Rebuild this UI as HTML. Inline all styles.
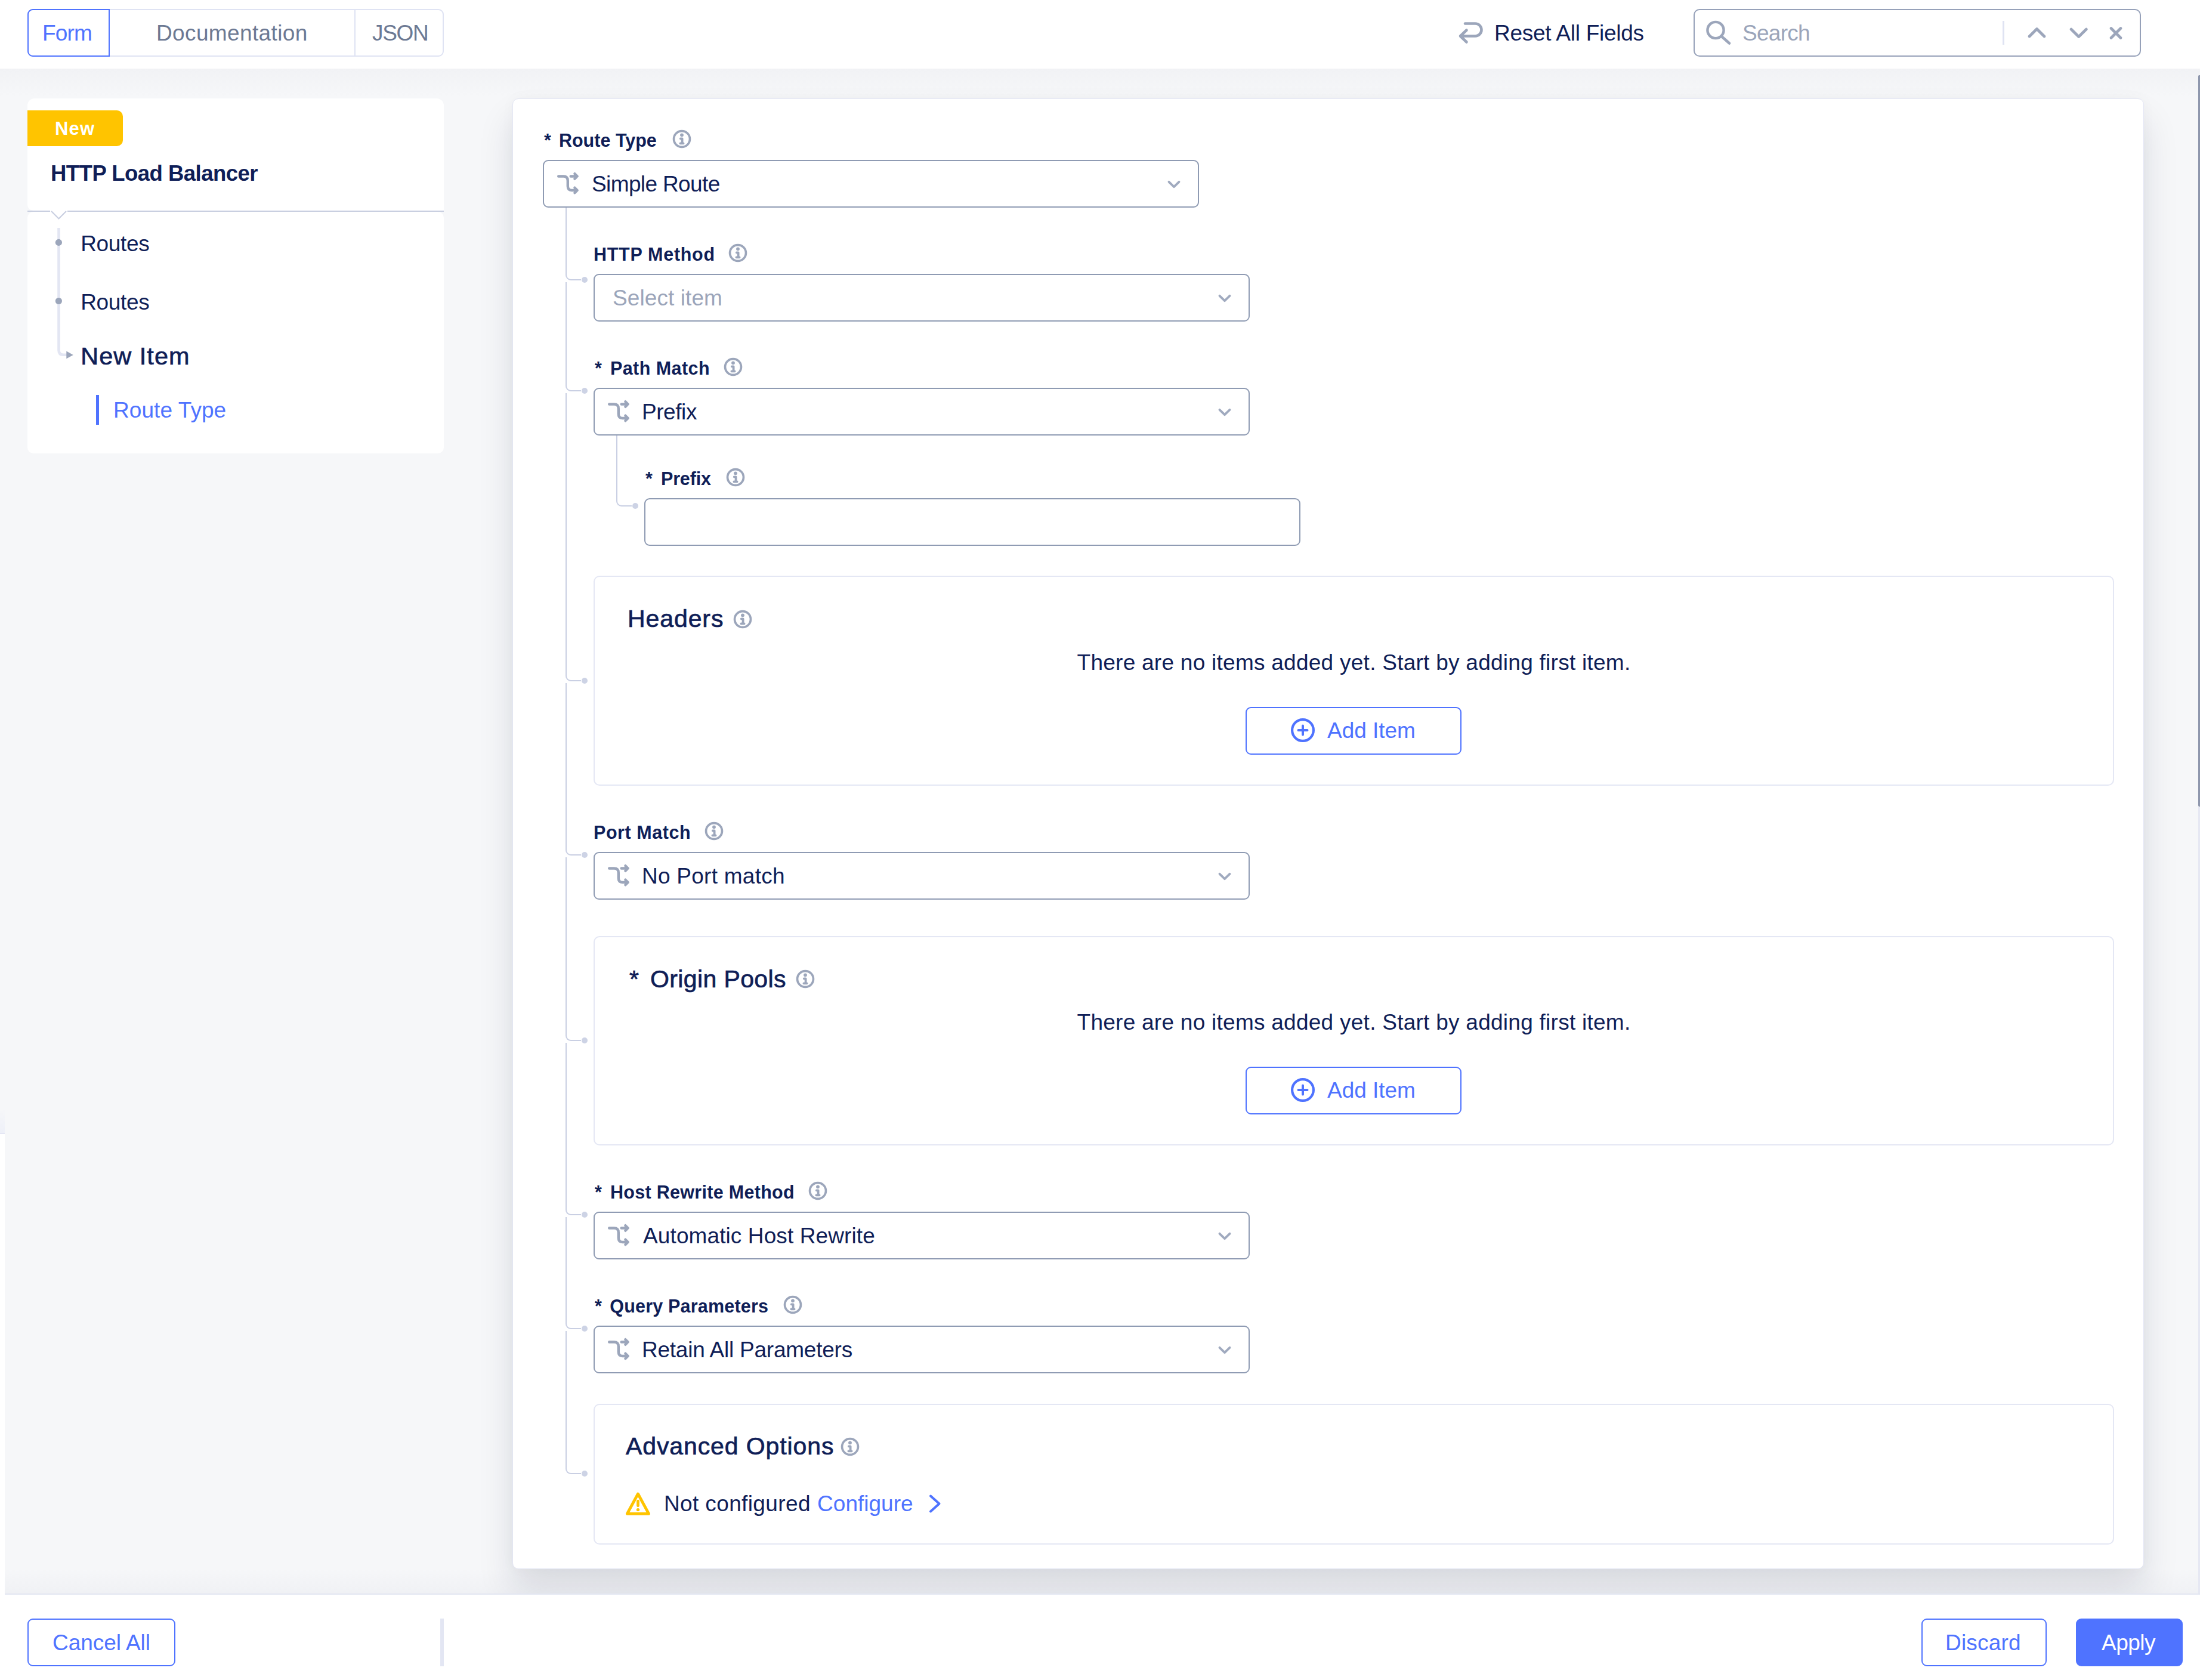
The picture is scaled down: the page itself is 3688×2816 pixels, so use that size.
<!DOCTYPE html>
<html lang="en"><head><meta charset="utf-8"><title>HTTP Load Balancer - Route</title>
<style>
*{box-sizing:border-box}
html,body{margin:0;padding:0}
body{width:3688px;height:2816px;overflow:hidden;background:#f6f7f9;font-family:"Liberation Sans", sans-serif;position:relative;color:#0f1e57}
.t{position:absolute;white-space:nowrap;display:block}
.ic{position:absolute;overflow:visible}
.abs{position:absolute}
header{position:absolute;left:0;top:0;width:3688px;height:115px;background:#fff}
.hshade{position:absolute;left:0;top:115px;width:3688px;height:46px;background:linear-gradient(#f1f2f5,#f6f7f9)}
.tabs{position:absolute;left:46px;top:15px;width:698px;height:80px;border:2px solid #dfe3f3;border-radius:9px;background:#fff}
.tab-active{position:absolute;left:46px;top:15px;width:138px;height:80px;border:2px solid #4f73ff;border-radius:9px 0 0 9px;background:#fff}
.tabdiv{position:absolute;left:594px;top:17px;width:2px;height:76px;background:#dfe3f3}
.search{position:absolute;left:2839px;top:15px;width:750px;height:80px;border:2px solid #96a1b9;border-radius:10px;background:#fff}
.sdiv{position:absolute;left:3357px;top:35px;width:3px;height:40px;background:#dfe3f2}
.side-top{position:absolute;left:46px;top:165px;width:698px;height:188px;background:#fff;border-radius:12px 12px 0 10px}
.side-line{position:absolute;left:46px;top:353px;width:698px;height:2px;background:#c8cee0}
.side-bot{position:absolute;left:46px;top:355px;width:698px;height:405px;background:#fff;border-radius:10px}
.badge{position:absolute;left:46px;top:185px;width:160px;height:60px;background:#ffc400;border-radius:0 10px 10px 0}
.card{position:absolute;left:859px;top:165px;width:2735px;height:2465px;background:#fff;border:1px solid #e3e6f4;border-radius:10px;box-shadow:0 36px 60px rgba(15,25,60,.12),0 0 24px rgba(15,25,60,.03)}
.sel{position:absolute;width:1100px;height:80px;border:2px solid #8f9bb3;border-radius:9px;background:#fff}
.box{position:absolute;left:995px;width:2549px;border:2px solid #e4e7f4;border-radius:10px;background:#fff}
.conn{position:absolute;width:26px;border-left:2px solid #c9cfe3;border-bottom:2px solid #c9cfe3;border-bottom-left-radius:9px}
.vline{position:absolute;width:2px;background:#c9cfe3}
.dot{position:absolute;width:10px;height:10px;border-radius:50%;background:#cdd3e5}
.btn{position:absolute;height:80px;border:2px solid #4f73ff;border-radius:9px;background:#fff}
.btn.primary{background:#4f73ff}
footer{position:absolute;left:0;top:2671px;width:3688px;height:145px;background:#fff;border-top:2px solid #e3e6f2}
.fdiv{position:absolute;left:738px;top:2713px;width:6px;height:80px;background:#e3e6f3}
.sb-thumb{position:absolute;left:3685px;top:126px;width:3px;height:1226px;background:#8e97ad;border-radius:2px 0 0 2px}
.sb-track{position:absolute;left:3685px;top:1352px;width:3px;height:1319px;background:#e6e8f3}
.lstrip{position:absolute;left:0;top:1899px;width:8px;height:780px;background:#fff;border-top:2px solid #e4e6f4}
.lshade{position:absolute;left:0;top:1859px;width:8px;height:40px;background:linear-gradient(rgba(238,240,248,0),#eef0f8)}
.fshade{position:absolute;left:8px;top:2628px;width:3680px;height:43px;background:linear-gradient(rgba(20,30,80,0),rgba(20,30,80,.028))}
</style></head><body>

<div class="hshade"></div>
<header>
<nav class="tabs"></nav><div class="tab-active"></div><div class="tabdiv"></div>
<span class="t" style="left:71.05px;top:37.00px;font-size:37px;line-height:37px;color:#4f73ff;letter-spacing:-0.85px;">Form</span>
<span class="t" style="left:262.00px;top:37.00px;font-size:37px;line-height:37px;color:#6c7993;letter-spacing:0.37px;">Documentation</span>
<span class="t" style="left:624.05px;top:37.00px;font-size:37px;line-height:37px;color:#6c7993;letter-spacing:-1.35px;">JSON</span>
<svg class="ic" style="left:2440px;top:30px" width="52" height="50" viewBox="2440 30 52 50"><path d="M2456 39.5H2473A10.5 10.5 0 0 1 2473 60.5H2448.5M2458.5 50.5L2448 60.5L2458.5 70.5" fill="none" stroke="#9ca6bb" stroke-width="4.6" stroke-linecap="round" stroke-linejoin="round"/></svg>
<span class="t" style="left:2504.95px;top:37.00px;font-size:37px;line-height:37px;color:#0f1e57;letter-spacing:-0.26px;">Reset All Fields</span>
<div class="search"></div><div class="sdiv"></div>
<svg class="ic" style="left:2855px;top:30px" width="52" height="50" viewBox="2855 30 52 50"><circle cx="2876" cy="50.5" r="13.6" fill="none" stroke="#9ca6bb" stroke-width="4.4"/><path d="M2886 61L2899 72.5" stroke="#9ca6bb" stroke-width="4.6" stroke-linecap="round"/></svg>
<span class="t" style="left:2921.05px;top:37.00px;font-size:37px;line-height:37px;color:#9ba5ba;letter-spacing:-0.75px;">Search</span>
<svg class="ic" style="left:3390px;top:35px" width="180" height="40" viewBox="3390 35 180 40"><path d="M3402 61L3414.5 48.5L3427 61M3472 49L3484.7 61.5L3497.4 49M3539 47.5L3555 63.5M3555 47.5L3539 63.5" fill="none" stroke="#9ca6bb" stroke-width="4.6" stroke-linecap="round" stroke-linejoin="round"/></svg>
</header>
<aside>
<div class="side-top"></div><div class="side-line"></div><div class="side-bot"></div>
<svg class="ic" style="left:80px;top:350px" width="40" height="22" viewBox="80 350 40 22"><path d="M84 352H113V356H84Z" fill="#fff"/><path d="M86 354L98.5 366.5L111 354" fill="#fff" stroke="#c8cee0" stroke-width="2"/></svg>
<div class="badge"></div>
<span class="t" style="left:92.00px;top:200.00px;font-size:31px;line-height:31px;color:#fff;font-weight:700;letter-spacing:1.14px;">New</span>
<span class="t" style="left:85.00px;top:273.00px;font-size:36.5px;line-height:36.5px;color:#0f1e57;font-weight:700;letter-spacing:-0.52px;">HTTP Load Balancer</span>
<svg class="ic" style="left:90px;top:380px" width="40" height="226" viewBox="90 380 40 226"><path d="M98.5 382V587Q98.5 594.7 106 594.7H113" fill="none" stroke="#e3e6f3" stroke-width="4.6"/><circle cx="98.4" cy="406.4" r="5.6" fill="#9ca6bb"/><circle cx="98.4" cy="504.5" r="5.6" fill="#9ca6bb"/><path d="M111.3 588.6L122.8 594.9L111.3 601.2Z" fill="#9ca6bb"/></svg>
<span class="t" style="left:135.16px;top:390.00px;font-size:37px;line-height:37px;color:#0f1e57;letter-spacing:-0.31px;">Routes</span>
<span class="t" style="left:135.16px;top:488.00px;font-size:37px;line-height:37px;color:#0f1e57;letter-spacing:-0.31px;">Routes</span>
<span class="t" style="left:135.16px;top:577.00px;font-size:41.4px;line-height:41.4px;color:#0f1e57;letter-spacing:1.08px;-webkit-text-stroke:0.7px #0f1e57;">New Item</span>
<div class="abs" style="left:161px;top:662px;width:5px;height:50px;background:#4f73ff"></div>
<span class="t" style="left:190.00px;top:669.00px;font-size:37px;line-height:37px;color:#4f73ff;letter-spacing:0.07px;">Route Type</span>
</aside>
<div class="fshade"></div>
<main>
<div class="card"></div>
<span class="t" style="left:912.05px;top:220.00px;font-size:30.5px;line-height:30.5px;color:#0f1e57;font-weight:700;">*</span><span class="t" style="left:936.95px;top:220.00px;font-size:30.5px;line-height:30.5px;color:#0f1e57;font-weight:700;letter-spacing:0.01px;">Route Type</span><svg class="ic" style="left:1125.5px;top:215.5px" width="34" height="34" viewBox="-17 -17 34 34"><circle r="13.45" fill="none" stroke="#9ca6bb" stroke-width="3.7"/><circle cx="0" cy="-6.7" r="2.9" fill="#9ca6bb"/><path d="M-2.2 -0.7H0.6V7.3M-2.6 7.3H2.6" fill="none" stroke="#9ca6bb" stroke-width="3.8" stroke-linecap="round" stroke-linejoin="round"/></svg>
<div class="sel" style="left:910px;top:268px"></div><svg class="ic" style="left:931px;top:286px" width="44" height="44" viewBox="-3 -3 44 44"><path d="M2.2 6.5H10.5Q17.8 6.5 17.8 14V23Q17.8 30 24.5 30H33.5M29.4 25.7L33.7 30L29.4 34.3M22.7 6.5H33.5M29.4 2.2L33.7 6.5L29.4 10.8" fill="none" stroke="#9ca6bb" stroke-width="4.4" stroke-linecap="round" stroke-linejoin="round"/></svg><span class="t" style="left:992.05px;top:290.00px;font-size:37px;line-height:37px;color:#0f1e57;letter-spacing:-0.63px;">Simple Route</span><svg class="ic" style="left:1954px;top:298.5px" width="28" height="20" viewBox="-14 -10 28 20"><path d="M-8.5 -4.2L0 4.2L8.5 -4.2" fill="none" stroke="#a0aabf" stroke-width="3.8" stroke-linecap="round" stroke-linejoin="round"/></svg>
<div class="conn" style="left:948px;top:348px;height:122px"></div><div class="dot" style="left:975px;top:464px"></div>
<div class="conn" style="left:948px;top:473px;height:183px"></div><div class="dot" style="left:975px;top:650px"></div>
<div class="conn" style="left:948px;top:659px;height:483px"></div><div class="dot" style="left:975px;top:1136px"></div>
<div class="conn" style="left:948px;top:1145px;height:289px"></div><div class="dot" style="left:975px;top:1428px"></div>
<div class="conn" style="left:948px;top:1437px;height:308px"></div><div class="dot" style="left:975px;top:1739px"></div>
<div class="conn" style="left:948px;top:1748px;height:289px"></div><div class="dot" style="left:975px;top:2031px"></div>
<div class="conn" style="left:948px;top:2040px;height:188px"></div><div class="dot" style="left:975px;top:2222px"></div>
<div class="conn" style="left:948px;top:2231px;height:240px"></div><div class="dot" style="left:975px;top:2465px"></div>
<span class="t" style="left:995.00px;top:411.00px;font-size:30.5px;line-height:30.5px;color:#0f1e57;font-weight:700;letter-spacing:0.71px;">HTTP Method</span><svg class="ic" style="left:1220px;top:406.5px" width="34" height="34" viewBox="-17 -17 34 34"><circle r="13.45" fill="none" stroke="#9ca6bb" stroke-width="3.7"/><circle cx="0" cy="-6.7" r="2.9" fill="#9ca6bb"/><path d="M-2.2 -0.7H0.6V7.3M-2.6 7.3H2.6" fill="none" stroke="#9ca6bb" stroke-width="3.8" stroke-linecap="round" stroke-linejoin="round"/></svg>
<div class="sel" style="left:995px;top:459px"></div><span class="t" style="left:1027.05px;top:481.00px;font-size:37px;line-height:37px;color:#9ba5ba;letter-spacing:0.08px;">Select item</span><svg class="ic" style="left:2039px;top:489.5px" width="28" height="20" viewBox="-14 -10 28 20"><path d="M-8.5 -4.2L0 4.2L8.5 -4.2" fill="none" stroke="#a0aabf" stroke-width="3.8" stroke-linecap="round" stroke-linejoin="round"/></svg>
<span class="t" style="left:997.05px;top:602.00px;font-size:30.5px;line-height:30.5px;color:#0f1e57;font-weight:700;">*</span><span class="t" style="left:1022.95px;top:602.00px;font-size:30.5px;line-height:30.5px;color:#0f1e57;font-weight:700;letter-spacing:0.44px;">Path Match</span><svg class="ic" style="left:1211.5px;top:597.5px" width="34" height="34" viewBox="-17 -17 34 34"><circle r="13.45" fill="none" stroke="#9ca6bb" stroke-width="3.7"/><circle cx="0" cy="-6.7" r="2.9" fill="#9ca6bb"/><path d="M-2.2 -0.7H0.6V7.3M-2.6 7.3H2.6" fill="none" stroke="#9ca6bb" stroke-width="3.8" stroke-linecap="round" stroke-linejoin="round"/></svg>
<div class="sel" style="left:995px;top:650px"></div><svg class="ic" style="left:1016px;top:668px" width="44" height="44" viewBox="-3 -3 44 44"><path d="M2.2 6.5H10.5Q17.8 6.5 17.8 14V23Q17.8 30 24.5 30H33.5M29.4 25.7L33.7 30L29.4 34.3M22.7 6.5H33.5M29.4 2.2L33.7 6.5L29.4 10.8" fill="none" stroke="#9ca6bb" stroke-width="4.4" stroke-linecap="round" stroke-linejoin="round"/></svg><span class="t" style="left:1075.95px;top:672.00px;font-size:37px;line-height:37px;color:#0f1e57;letter-spacing:-0.42px;">Prefix</span><svg class="ic" style="left:2039px;top:680.5px" width="28" height="20" viewBox="-14 -10 28 20"><path d="M-8.5 -4.2L0 4.2L8.5 -4.2" fill="none" stroke="#a0aabf" stroke-width="3.8" stroke-linecap="round" stroke-linejoin="round"/></svg>
<div class="conn" style="left:1033px;top:730px;height:119px"></div><div class="dot" style="left:1060px;top:843px"></div>
<span class="t" style="left:1082.05px;top:787.00px;font-size:30.5px;line-height:30.5px;color:#0f1e57;font-weight:700;">*</span><span class="t" style="left:1107.95px;top:787.00px;font-size:30.5px;line-height:30.5px;color:#0f1e57;font-weight:700;letter-spacing:-0.15px;">Prefix</span><svg class="ic" style="left:1215.5px;top:782.5px" width="34" height="34" viewBox="-17 -17 34 34"><circle r="13.45" fill="none" stroke="#9ca6bb" stroke-width="3.7"/><circle cx="0" cy="-6.7" r="2.9" fill="#9ca6bb"/><path d="M-2.2 -0.7H0.6V7.3M-2.6 7.3H2.6" fill="none" stroke="#9ca6bb" stroke-width="3.8" stroke-linecap="round" stroke-linejoin="round"/></svg>
<div class="sel" style="left:1080px;top:835px"></div>
<section class="box" style="top:965px;height:352px"></section>
<span class="t" style="left:1051.95px;top:1017.00px;font-size:41px;line-height:41px;color:#0f1e57;letter-spacing:0.92px;-webkit-text-stroke:0.7px #0f1e57;">Headers</span>
<svg class="ic" style="left:1228px;top:1021px" width="34" height="34" viewBox="-17 -17 34 34"><circle r="13.45" fill="none" stroke="#9ca6bb" stroke-width="3.7"/><circle cx="0" cy="-6.7" r="2.9" fill="#9ca6bb"/><path d="M-2.2 -0.7H0.6V7.3M-2.6 7.3H2.6" fill="none" stroke="#9ca6bb" stroke-width="3.8" stroke-linecap="round" stroke-linejoin="round"/></svg>
<span class="t" style="left:1805.52px;top:1092.00px;font-size:37px;line-height:37px;color:#0f1e57;letter-spacing:0.26px;">There are no items added yet. Start by adding first item.</span>
<div class="btn" style="left:2088px;top:1185px;width:362px"></div><svg class="ic" style="left:2160px;top:1200.1px" width="48" height="48" viewBox="-24 -24 48 48"><circle r="17.9" fill="none" stroke="#4f73ff" stroke-width="4.2"/><path d="M-7.5 0H7.5M0 -7.5V7.5" stroke="#4f73ff" stroke-width="4" stroke-linecap="round"/></svg><span class="t" style="left:2225.05px;top:1206.00px;font-size:37px;line-height:37px;color:#4f73ff;letter-spacing:-0.05px;">Add Item</span>
<span class="t" style="left:995.00px;top:1380.00px;font-size:30.5px;line-height:30.5px;color:#0f1e57;font-weight:700;letter-spacing:0.56px;">Port Match</span><svg class="ic" style="left:1180px;top:1375.5px" width="34" height="34" viewBox="-17 -17 34 34"><circle r="13.45" fill="none" stroke="#9ca6bb" stroke-width="3.7"/><circle cx="0" cy="-6.7" r="2.9" fill="#9ca6bb"/><path d="M-2.2 -0.7H0.6V7.3M-2.6 7.3H2.6" fill="none" stroke="#9ca6bb" stroke-width="3.8" stroke-linecap="round" stroke-linejoin="round"/></svg>
<div class="sel" style="left:995px;top:1428px"></div><svg class="ic" style="left:1016px;top:1446px" width="44" height="44" viewBox="-3 -3 44 44"><path d="M2.2 6.5H10.5Q17.8 6.5 17.8 14V23Q17.8 30 24.5 30H33.5M29.4 25.7L33.7 30L29.4 34.3M22.7 6.5H33.5M29.4 2.2L33.7 6.5L29.4 10.8" fill="none" stroke="#9ca6bb" stroke-width="4.4" stroke-linecap="round" stroke-linejoin="round"/></svg><span class="t" style="left:1075.95px;top:1450.00px;font-size:37px;line-height:37px;color:#0f1e57;letter-spacing:0.26px;">No Port match</span><svg class="ic" style="left:2039px;top:1458.5px" width="28" height="20" viewBox="-14 -10 28 20"><path d="M-8.5 -4.2L0 4.2L8.5 -4.2" fill="none" stroke="#a0aabf" stroke-width="3.8" stroke-linecap="round" stroke-linejoin="round"/></svg>
<section class="box" style="top:1569px;height:351px"></section>
<span class="t" style="left:1055.05px;top:1621.00px;font-size:41px;line-height:41px;color:#0f1e57;-webkit-text-stroke:0.7px #0f1e57;">*</span>
<span class="t" style="left:1090.05px;top:1621.00px;font-size:41px;line-height:41px;color:#0f1e57;letter-spacing:0.38px;-webkit-text-stroke:0.7px #0f1e57;">Origin Pools</span>
<svg class="ic" style="left:1333px;top:1624px" width="34" height="34" viewBox="-17 -17 34 34"><circle r="13.45" fill="none" stroke="#9ca6bb" stroke-width="3.7"/><circle cx="0" cy="-6.7" r="2.9" fill="#9ca6bb"/><path d="M-2.2 -0.7H0.6V7.3M-2.6 7.3H2.6" fill="none" stroke="#9ca6bb" stroke-width="3.8" stroke-linecap="round" stroke-linejoin="round"/></svg>
<span class="t" style="left:1805.52px;top:1695.00px;font-size:37px;line-height:37px;color:#0f1e57;letter-spacing:0.26px;">There are no items added yet. Start by adding first item.</span>
<div class="btn" style="left:2088px;top:1788px;width:362px"></div><svg class="ic" style="left:2160px;top:1803.1px" width="48" height="48" viewBox="-24 -24 48 48"><circle r="17.9" fill="none" stroke="#4f73ff" stroke-width="4.2"/><path d="M-7.5 0H7.5M0 -7.5V7.5" stroke="#4f73ff" stroke-width="4" stroke-linecap="round"/></svg><span class="t" style="left:2225.05px;top:1809.00px;font-size:37px;line-height:37px;color:#4f73ff;letter-spacing:-0.05px;">Add Item</span>
<span class="t" style="left:997.05px;top:1983.00px;font-size:30.5px;line-height:30.5px;color:#0f1e57;font-weight:700;">*</span><span class="t" style="left:1022.95px;top:1983.00px;font-size:30.5px;line-height:30.5px;color:#0f1e57;font-weight:700;letter-spacing:0.30px;">Host Rewrite Method</span><svg class="ic" style="left:1354px;top:1978.5px" width="34" height="34" viewBox="-17 -17 34 34"><circle r="13.45" fill="none" stroke="#9ca6bb" stroke-width="3.7"/><circle cx="0" cy="-6.7" r="2.9" fill="#9ca6bb"/><path d="M-2.2 -0.7H0.6V7.3M-2.6 7.3H2.6" fill="none" stroke="#9ca6bb" stroke-width="3.8" stroke-linecap="round" stroke-linejoin="round"/></svg>
<div class="sel" style="left:995px;top:2031px"></div><svg class="ic" style="left:1016px;top:2049px" width="44" height="44" viewBox="-3 -3 44 44"><path d="M2.2 6.5H10.5Q17.8 6.5 17.8 14V23Q17.8 30 24.5 30H33.5M29.4 25.7L33.7 30L29.4 34.3M22.7 6.5H33.5M29.4 2.2L33.7 6.5L29.4 10.8" fill="none" stroke="#9ca6bb" stroke-width="4.4" stroke-linecap="round" stroke-linejoin="round"/></svg><span class="t" style="left:1078.05px;top:2053.00px;font-size:37px;line-height:37px;color:#0f1e57;letter-spacing:0.10px;">Automatic Host Rewrite</span><svg class="ic" style="left:2039px;top:2061.5px" width="28" height="20" viewBox="-14 -10 28 20"><path d="M-8.5 -4.2L0 4.2L8.5 -4.2" fill="none" stroke="#a0aabf" stroke-width="3.8" stroke-linecap="round" stroke-linejoin="round"/></svg>
<span class="t" style="left:997.05px;top:2174.00px;font-size:30.5px;line-height:30.5px;color:#0f1e57;font-weight:700;">*</span><span class="t" style="left:1022.26px;top:2174.00px;font-size:30.5px;line-height:30.5px;color:#0f1e57;font-weight:700;letter-spacing:0.20px;">Query Parameters</span><svg class="ic" style="left:1311.5px;top:2169.5px" width="34" height="34" viewBox="-17 -17 34 34"><circle r="13.45" fill="none" stroke="#9ca6bb" stroke-width="3.7"/><circle cx="0" cy="-6.7" r="2.9" fill="#9ca6bb"/><path d="M-2.2 -0.7H0.6V7.3M-2.6 7.3H2.6" fill="none" stroke="#9ca6bb" stroke-width="3.8" stroke-linecap="round" stroke-linejoin="round"/></svg>
<div class="sel" style="left:995px;top:2222px"></div><svg class="ic" style="left:1016px;top:2240px" width="44" height="44" viewBox="-3 -3 44 44"><path d="M2.2 6.5H10.5Q17.8 6.5 17.8 14V23Q17.8 30 24.5 30H33.5M29.4 25.7L33.7 30L29.4 34.3M22.7 6.5H33.5M29.4 2.2L33.7 6.5L29.4 10.8" fill="none" stroke="#9ca6bb" stroke-width="4.4" stroke-linecap="round" stroke-linejoin="round"/></svg><span class="t" style="left:1075.95px;top:2244.00px;font-size:37px;line-height:37px;color:#0f1e57;letter-spacing:-0.23px;">Retain All Parameters</span><svg class="ic" style="left:2039px;top:2252.5px" width="28" height="20" viewBox="-14 -10 28 20"><path d="M-8.5 -4.2L0 4.2L8.5 -4.2" fill="none" stroke="#a0aabf" stroke-width="3.8" stroke-linecap="round" stroke-linejoin="round"/></svg>
<section class="box" style="top:2353px;height:236px"></section>
<span class="t" style="left:1048.95px;top:2404.00px;font-size:41px;line-height:41px;color:#0f1e57;letter-spacing:0.90px;-webkit-text-stroke:0.7px #0f1e57;">Advanced Options</span>
<svg class="ic" style="left:1407.5px;top:2408px" width="34" height="34" viewBox="-17 -17 34 34"><circle r="13.45" fill="none" stroke="#9ca6bb" stroke-width="3.7"/><circle cx="0" cy="-6.7" r="2.9" fill="#9ca6bb"/><path d="M-2.2 -0.7H0.6V7.3M-2.6 7.3H2.6" fill="none" stroke="#9ca6bb" stroke-width="3.8" stroke-linecap="round" stroke-linejoin="round"/></svg>
<svg class="ic" style="left:1045px;top:2498px" width="50" height="46" viewBox="1045 2498 50 46"><path d="M1069.5 2504L1087.6 2537.4H1051.3Z" fill="none" stroke="#ffc400" stroke-width="4.8" stroke-linejoin="round"/><path d="M1069.5 2516.2V2523.8" stroke="#ffc400" stroke-width="4.7" stroke-linecap="round"/><circle cx="1069.5" cy="2530.6" r="2.7" fill="#ffc400"/></svg>
<span class="t" style="left:1112.95px;top:2502.00px;font-size:37px;line-height:37px;color:#0f1e57;letter-spacing:0.38px;">Not configured</span>
<span class="t" style="left:1370.05px;top:2502.00px;font-size:37px;line-height:37px;color:#4f73ff;letter-spacing:0.02px;">Configure</span>
<svg class="ic" style="left:1550px;top:2500px" width="36" height="42" viewBox="1550 2500 36 42"><path d="M1560 2507.5L1574.5 2520.5L1560 2533.5" fill="none" stroke="#4f73ff" stroke-width="4" stroke-linecap="round" stroke-linejoin="round"/></svg>
</main>
<div class="sb-track"></div><div class="sb-thumb"></div>
<footer></footer>
<div class="lshade"></div><div class="lstrip"></div>
<div class="btn" style="left:46px;top:2713px;width:248px"></div>
<span class="t" style="left:88.05px;top:2735.00px;font-size:37px;line-height:37px;color:#4f73ff;letter-spacing:-0.07px;">Cancel All</span>
<div class="fdiv"></div>
<div class="btn" style="left:3221px;top:2713px;width:210px"></div>
<span class="t" style="left:3261.05px;top:2735.00px;font-size:37px;line-height:37px;color:#4f73ff;letter-spacing:0.18px;">Discard</span>
<div class="btn primary" style="left:3480px;top:2713px;width:179px"></div>
<span class="t" style="left:3523.05px;top:2735.00px;font-size:37px;line-height:37px;color:#fff;letter-spacing:-0.54px;">Apply</span>
</body></html>
